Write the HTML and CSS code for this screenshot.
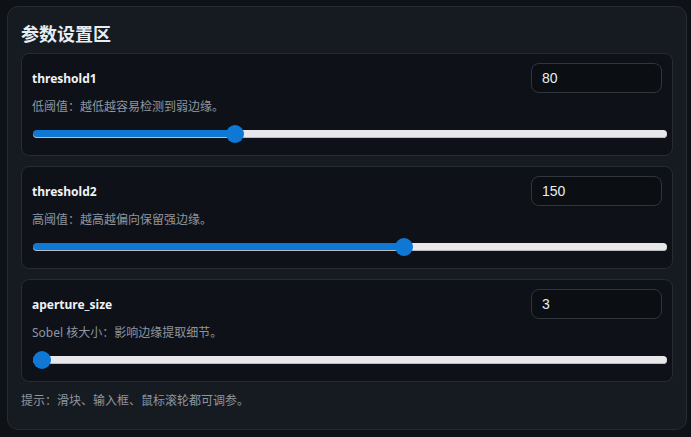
FILE: index.html
```html
<!DOCTYPE html>
<html lang="zh-CN">
<head>
<meta charset="utf-8">
<title>参数设置区</title>
<link rel="stylesheet" href="styles.css">
</head>
<body>
<section class="panel">
  <h2 class="title">参数设置区</h2>
  <div class="card">
    <div class="row">
      <span class="label">threshold1</span>
      <input class="num" type="text" value="80">
    </div>
    <div class="desc">低阈值：越低越容易检测到弱边缘。</div>
    <input class="slider" type="range" min="0" max="255" value="80" style="--p: 31.9%">
  </div>
  <div class="card">
    <div class="row">
      <span class="label">threshold2</span>
      <input class="num" type="text" value="150">
    </div>
    <div class="desc">高阈值：越高越偏向保留强边缘。</div>
    <input class="slider" type="range" min="0" max="255" value="150" style="--p: 58.6%">
  </div>
  <div class="card">
    <div class="row">
      <span class="label">aperture_size</span>
      <input class="num" type="text" value="3">
    </div>
    <div class="desc">Sobel 核大小：影响边缘提取细节。</div>
    <input class="slider" type="range" min="3" max="7" step="2" value="3" style="--p: 1.4%">
  </div>
  <div class="hint">提示：滑块、输入框、鼠标滚轮都可调参。</div>
</section>
</body>
</html>
```

FILE: styles.css
```css
html, body {
  margin: 0;
  padding: 0;
  background: #0e1116;
  font-family: "Noto Sans", "Noto Sans CJK SC", sans-serif;
}
body {
  padding: 6px 4px 0 7px;
}
.panel {
  background: #161a21;
  border: 1px solid #272c34;
  border-radius: 11px;
  padding: 13px 13px 19px 13px;
}
.title {
  margin: 0 0 7px 0;
  font-size: 18px;
  line-height: 26px;
  font-weight: 700;
  color: #e6edf3;
  font-family: "Noto Sans CJK SC", sans-serif;
}
.card {
  background: #0e1117;
  border: 1px solid #272c34;
  border-radius: 8px;
  padding: 9px 10px 12px 10px;
  margin-bottom: 10px;
}
.card:last-of-type { margin-bottom: 0; }
.row {
  display: flex;
  align-items: center;
  justify-content: space-between;
  height: 30px;
}
.label {
  font-size: 12px;
  font-weight: 700;
  color: #f0f3f6;
}
.num {
  box-sizing: border-box;
  width: 131px;
  height: 30px;
  background: #0b0e13;
  border: 1px solid #30363d;
  border-radius: 8px;
  color: #e6edf3;
  font-family: "Liberation Sans", sans-serif;
  font-size: 14px;
  padding: 0 10px;
  outline: none;
}
.desc {
  margin-top: 5px;
  font-size: 12px;
  line-height: 18px;
  color: #8e96a0;
  font-family: "Noto Sans", "Noto Sans CJK SC", sans-serif;
}
.slider {
  -webkit-appearance: none;
  appearance: none;
  display: block;
  width: calc(100% + 4px);
  height: 18px;
  margin: 9px 0 0 1px;
  padding: 0;
  background: transparent;
}
.slider::-webkit-slider-runnable-track {
  height: 8px;
  border-radius: 4px;
  background: linear-gradient(to right, #0f78d4 var(--p), #e8e8eb var(--p));
  box-shadow: inset 0 -1px 0 #b9bdc3;
}
.slider::-webkit-slider-thumb {
  -webkit-appearance: none;
  appearance: none;
  width: 18px;
  height: 18px;
  margin-top: -5px;
  border-radius: 50%;
  background: #0f78d4;
  border: none;
}
.hint {
  margin-top: 7px;
  font-size: 12px;
  line-height: 18px;
  color: #8e96a0;
}
```
